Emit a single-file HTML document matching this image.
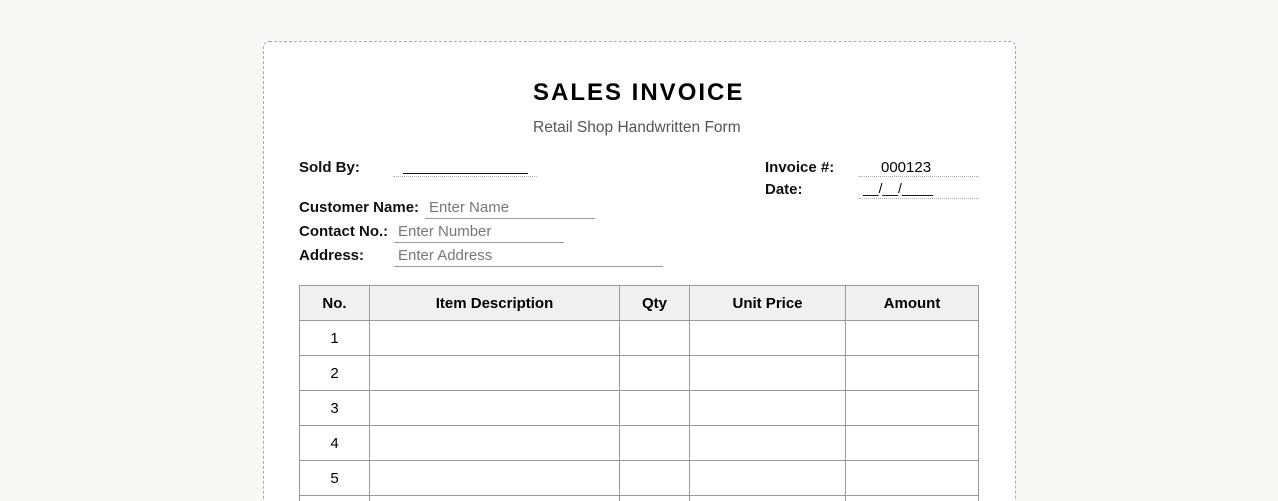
<!DOCTYPE html><html><head><style>
html,body{margin:0;width:1278px;height:501px;overflow:hidden}
body{background:#f9f8f5;font-family:"Liberation Sans",sans-serif}
#w{position:relative;width:1278px;height:501px;overflow:hidden}
.card{position:absolute;left:263px;top:41px;width:751px;height:470px;background:#fff;border:1px dashed #aaa;border-radius:6px}
.a{position:absolute;white-space:nowrap}
.l{font-size:15px;font-weight:bold;color:#111}
.ph{font-size:15px;color:#777}
table{position:absolute;left:299px;top:285px;border-collapse:collapse;font-size:15px}
td,th{border:1px solid #999;height:34px;padding:0;text-align:center}
th{background:#f0f0f0;font-weight:bold}
</style></head><body><div id="w">
<div class="card"></div>
<div class="a" style="left:533px;top:79px;font-size:24px;font-weight:bold;letter-spacing:2px">SALES INVOICE</div>
<div class="a" style="left:533px;top:119px;font-size:15.5px;color:#555">Retail Shop Handwritten Form</div>
<div class="a l" style="left:299px;top:159px">Sold By:</div>
<div class="a" style="left:403px;top:173px;width:125px;border-top:1px solid #111"></div>
<div class="a" style="left:393px;top:176px;width:144px;border-top:1px dotted #aaa"></div>
<div class="a l" style="left:299px;top:199px">Customer Name:</div>
<div class="a ph" style="left:429px;top:199px">Enter Name</div>
<div class="a" style="left:425px;top:218px;width:170px;border-top:1px solid #999"></div>
<div class="a l" style="left:299px;top:223px">Contact No.:</div>
<div class="a ph" style="left:398px;top:223px">Enter Number</div>
<div class="a" style="left:394px;top:242px;width:170px;border-top:1px solid #999"></div>
<div class="a l" style="left:299px;top:247px">Address:</div>
<div class="a ph" style="left:398px;top:247px">Enter Address</div>
<div class="a" style="left:394px;top:266px;width:269px;border-top:1px solid #999"></div>
<div class="a l" style="left:765px;top:159px">Invoice #:</div>
<div class="a" style="left:881px;top:159px;font-size:15px">000123</div>
<div class="a" style="left:859px;top:176px;width:120px;border-top:1px dotted #aaa"></div>
<div class="a l" style="left:765px;top:181px">Date:</div>
<div class="a" style="left:863px;top:180px;font-size:14px">__/__/____</div>
<div class="a" style="left:859px;top:198px;width:120px;border-top:1px dotted #aaa"></div>
<table>
<tr><th style="width:69px">No.</th><th style="width:249px">Item Description</th><th style="width:69px">Qty</th><th style="width:155px">Unit Price</th><th style="width:132px">Amount</th></tr>
<tr><td>1</td><td></td><td></td><td></td><td></td></tr>
<tr><td>2</td><td></td><td></td><td></td><td></td></tr>
<tr><td>3</td><td></td><td></td><td></td><td></td></tr>
<tr><td>4</td><td></td><td></td><td></td><td></td></tr>
<tr><td>5</td><td></td><td></td><td></td><td></td></tr>
<tr><td style="height:4px"></td><td></td><td></td><td></td><td></td></tr>
</table>
</div></body></html>
